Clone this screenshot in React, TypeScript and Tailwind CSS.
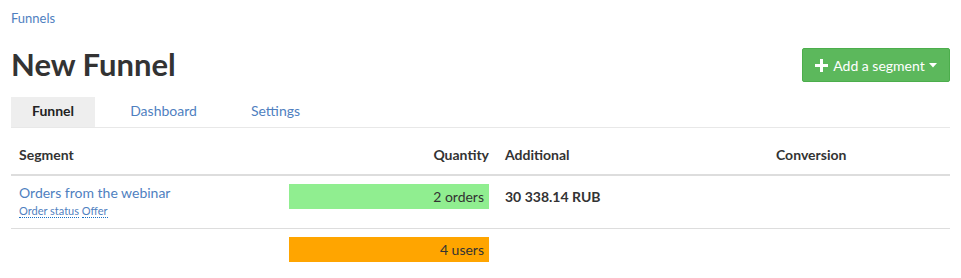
import React from "react";

export default function App() {
  const font = { fontFamily: "Lato, 'Open Sans', Arial, sans-serif" };
  return (
    <div className="w-[961px] h-[278px] bg-white text-[#333] overflow-hidden" style={font}>
      <div className="px-[11px]">
        <div className="pt-[9px] h-[28px] text-[13px] leading-[18px] text-[#4f7fbf]">Funnels</div>
        <div className="flex items-center justify-between mt-[20px] h-[34px]">
          <h1 className="text-[31px] leading-[34px] font-bold text-[#333] -mt-[2px]">New Funnel</h1>
          <button className="h-[34px] w-[148px] flex items-center justify-center gap-[5px] bg-[#5cb85c] border border-[#4cae4c] text-white text-[14px] rounded-[2px]">
            <svg width="13" height="13" viewBox="0 0 13 13">
              <path d="M5 0h3v5h5v3H8v5H5V8H0V5h5z" fill="#fff" />
            </svg>
            <span>Add a segment</span>
            <svg width="8" height="5" viewBox="0 0 8 5" className="-ml-[1px]">
              <path d="M0 0h8L4 4.5z" fill="#fff" />
            </svg>
          </button>
        </div>
        <div className="mt-[15px] flex h-[31px] border-b border-[#e8e8e8] text-[14px]">
          <div className="w-[84px] flex items-center justify-center pb-[3px] bg-[#eeeeee] font-bold text-[#222]">Funnel</div>
          <div className="w-[137px] flex items-center justify-center pb-[3px] text-[#4f7fbf]">Dashboard</div>
          <div className="w-[87px] flex items-center justify-center pb-[3px] text-[#4f7fbf]">Settings</div>
        </div>
        <div className="mt-[10px] text-[14px]">
          <div className="grid grid-cols-[270px_216px_271px_182px] h-[38px] border-b-2 border-[#dddddd] font-bold text-[#333]">
            <div className="px-2 pt-[6px]">Segment</div>
            <div className="px-2 pt-[6px] text-right">Quantity</div>
            <div className="px-2 pt-[6px]">Additional</div>
            <div className="px-2 pt-[6px]">Conversion</div>
          </div>
          <div className="grid grid-cols-[270px_216px_271px_182px] h-[53px] border-b border-[#dddddd]">
            <div className="px-2 pt-[8px]">
              <div className="text-[14px] leading-[18px] text-[#4f7fbf]">Orders from the webinar</div>
              <div className="text-[11px] leading-[15px] text-[#4f7fbf] mt-[1px]">
                <span className="border-b border-dotted border-[#1a6fc4]">Order status</span>{" "}
                <span className="border-b border-dotted border-[#1a6fc4]">Offer</span>
              </div>
            </div>
            <div className="px-2 pt-[8px]">
              <div className="h-[25px] bg-[#90ee90] text-right pr-[5px] leading-[25px] text-[#333]">2 orders</div>
            </div>
            <div className="px-2 pt-[8px] font-bold leading-[25px] text-[#333]">30 338.14 RUB</div>
            <div className="px-2"></div>
          </div>
          <div className="grid grid-cols-[270px_216px_271px_182px] h-[41px]">
            <div className="px-2"></div>
            <div className="px-2 pt-[8px]">
              <div className="h-[25px] bg-[#ffa500] text-right pr-[5px] leading-[25px] text-[#333]">4 users</div>
            </div>
            <div className="px-2"></div>
            <div className="px-2"></div>
          </div>
        </div>
      </div>
    </div>
  );
}
